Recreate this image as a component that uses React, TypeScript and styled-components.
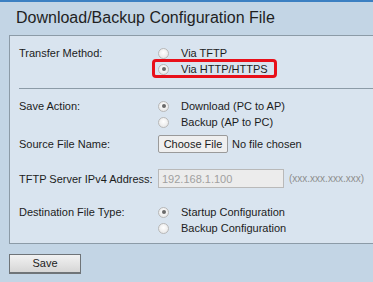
import React from "react";
import styled, { createGlobalStyle } from "styled-components";

const GlobalStyle = createGlobalStyle`
  html, body {
    margin: 0;
    padding: 0;
    background: #c3d5e5;
    font-family: "Liberation Sans", Arial, sans-serif;
  }
`;

const Page = styled.div`
  width: 373px;
  height: 282px;
  overflow: hidden;
  border-top: 2px solid #3c80c2;
  box-sizing: border-box;
  background: #c3d5e5;
`;

const Title = styled.h1`
  margin: 0;
  height: 33px;
  padding: 5px 0 0 16px;
  box-sizing: border-box;
  font-size: 16px;
  font-weight: normal;
  color: #1f1f1f;
  line-height: 22px;
`;

const Panel = styled.div`
  margin-left: 9px;
  background: #d9e4ef;
  border: 1px solid #8c9ba7;
  border-right: none;
  padding: 9px 0 7px 9px;
`;

const Section = styled.div<{ gap?: number; top?: number }>`
  display: grid;
  grid-template-columns: 138px 1fr;
  row-gap: ${({ gap }) => gap ?? 0}px;
  margin-top: ${({ top }) => top ?? 0}px;
`;

const Divider = styled.hr`
  margin: 11px 0 9px 0;
  border: none;
  border-top: 1px solid #8c9ba7;
  height: 0;
`;

const Label = styled.div<{ center?: boolean }>`
  font-size: 11px;
  line-height: 16px;
  color: #1c1c1c;
  white-space: nowrap;
  align-self: ${({ center }) => (center ? "center" : "start")};
`;

const Options = styled.div`
  display: flex;
  flex-direction: column;
`;

const Option = styled.label<{ highlight?: boolean }>`
  position: relative;
  display: flex;
  align-items: center;
  height: 16px;
  font-size: 11px;
  color: #1c1c1c;
  white-space: nowrap;
  ${({ highlight }) =>
    highlight &&
    `&::after {
      content: "";
      position: absolute;
      left: -5px;
      top: -2px;
      width: 125px;
      height: 19px;
      border: 3px solid #e8101a;
      border-radius: 4px;
      box-sizing: border-box;
    }`}
`;

const Radio = styled.span<{ checked?: boolean }>`
  width: 9px;
  height: 9px;
  border-radius: 50%;
  border: 1px solid #b8b8b8;
  background: radial-gradient(circle at 50% 40%, #ffffff 0%, #e2e2e2 100%);
  margin: 0 12px 0 1px;
  flex: none;
  display: flex;
  align-items: center;
  justify-content: center;
  &::before {
    content: "";
    width: 4px;
    height: 4px;
    border-radius: 50%;
    background: ${({ checked }) => (checked ? "#6a6a6a" : "transparent")};
  }
`;

const FileRow = styled.div`
  display: flex;
  align-items: center;
  font-size: 11px;
  color: #1c1c1c;
  gap: 4px;
  margin-left: 1px;
  white-space: nowrap;
`;

const FileButton = styled.button`
  width: 70px;
  height: 18px;
  padding: 0;
  font-family: inherit;
  font-size: 11px;
  color: #1c1c1c;
  background: #efefef;
  border: 1px solid #9a9a9a;
  border-radius: 2px;
`;

const AddressRow = styled.div`
  display: flex;
  align-items: center;
  gap: 5px;
  margin-left: 1px;
  white-space: nowrap;
`;

const AddressInput = styled.input`
  width: 126px;
  height: 19px;
  box-sizing: border-box;
  padding: 0 3px;
  font-family: inherit;
  font-size: 11px;
  color: #a0a0a0;
  background: #ececec;
  border: 1px solid #b9b9b9;
  &:disabled {
    color: #a0a0a0;
  }
`;

const Hint = styled.span`
  font-size: 10px;
  color: #8e8e8e;
`;

const Footer = styled.div`
  padding: 9px 0 0 9px;
`;

const SaveButton = styled.button`
  width: 72px;
  height: 20px;
  font-family: inherit;
  font-size: 11px;
  color: #1c1c1c;
  background: linear-gradient(#f2f2f2, #d6d6d6);
  border: 1px solid #6f7478;
  border-bottom-width: 2px;
`;

export default function App(): JSX.Element {
  return (
    <Page>
      <GlobalStyle />
      <Title>Download/Backup Configuration File</Title>
      <Panel>
        <Section>
          <Label>Transfer Method:</Label>
          <Options>
            <Option>
              <Radio />
              Via TFTP
            </Option>
            <Option highlight>
              <Radio checked />
              Via HTTP/HTTPS
            </Option>
          </Options>
        </Section>
        <Divider />
        <Section gap={5}>
          <Label>Save Action:</Label>
          <Options>
            <Option>
              <Radio checked />
              Download (PC to AP)
            </Option>
            <Option>
              <Radio />
              Backup (AP to PC)
            </Option>
          </Options>
          <Label center>Source File Name:</Label>
          <FileRow>
            <FileButton>Choose File</FileButton>
            No file chosen
          </FileRow>
        </Section>
        <Section gap={16} top={16}>
          <Label center>TFTP Server IPv4 Address:</Label>
          <AddressRow>
            <AddressInput disabled value="192.168.1.100" readOnly />
            <Hint>(xxx.xxx.xxx.xxx)</Hint>
          </AddressRow>
          <Label>Destination File Type:</Label>
          <Options>
            <Option>
              <Radio checked />
              Startup Configuration
            </Option>
            <Option>
              <Radio />
              Backup Configuration
            </Option>
          </Options>
        </Section>
      </Panel>
      <Footer>
        <SaveButton>Save</SaveButton>
      </Footer>
    </Page>
  );
}
